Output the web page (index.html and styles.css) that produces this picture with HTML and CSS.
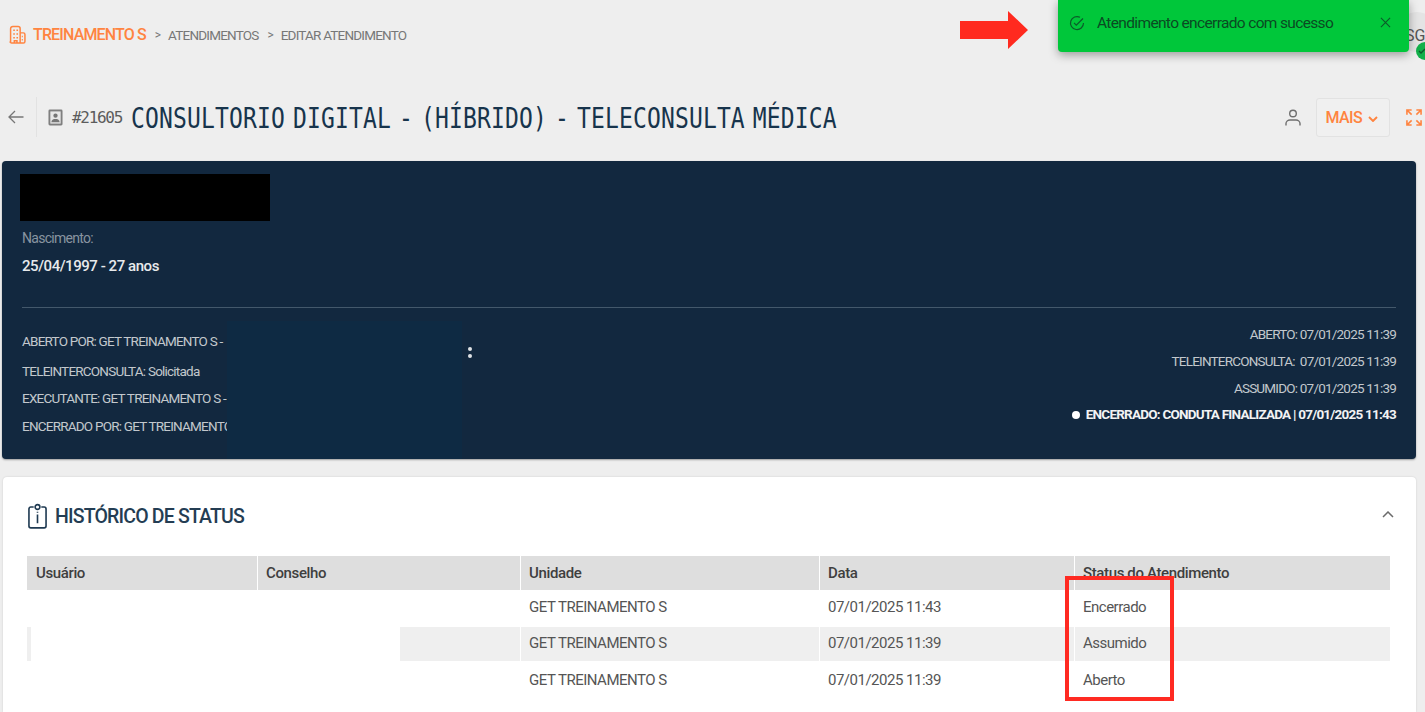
FILE: index.html
```html
<!DOCTYPE html>
<html lang="pt-BR">
<head>
<meta charset="utf-8">
<title>Editar atendimento</title>
<link rel="stylesheet" href="styles.css">
</head>
<body>
<div class="page">
  <header class="topbar">
    <svg class="hospital" viewBox="0 0 16 18" width="17" height="20" fill="none" stroke="#ff8440" stroke-width="1.400"><path d="M1.500 16.500V3a2 2 0 0 1 2-2h5a2 2 0 0 1 2 2v13.500M10.500 7h3a1.500 1.500 0 0 1 1.500 1.500v6.500a1.500 1.500 0 0 1-1.500 1.500h-11A1.500 1.500 0 0 1 1 15"/><path d="M4 4.500h1.500M7 4.500h1.500M4 8h1.500M7 8h1.500M4 11.500h1.500M7 11.500h1.500M12 10.500h1M12 13.500h1M5 16.500v-2h2.500v2"/></svg>
    <span class="crumb-home">TREINAMENTO S</span>
    <span class="crumb-sep">&gt;</span>
    <span class="crumb">ATENDIMENTOS</span>
    <span class="crumb-sep">&gt;</span>
    <span class="crumb">EDITAR ATENDIMENTO</span>
  </header>

  <div class="titlebar">
    <svg class="back" viewBox="0 0 16 14" width="16" height="14" fill="none" stroke="#777" stroke-width="1.300"><path d="M15.500 7H1M7 1 1 7l6 6"/></svg>
    <span class="vsep"></span>
    <svg class="badge" viewBox="0 0 16 18" width="15" height="17"><rect x="0.500" y="0.500" width="15" height="17" rx="1.500" fill="#7f7f7f"/><rect x="2.500" y="2.500" width="11" height="13" fill="#e8e8e8"/><circle cx="8" cy="7" r="2.300" fill="#777"/><path d="M3.500 14c.5-3 2.500-3.500 4.500-3.500s4 .5 4.500 3.500z" fill="#777"/></svg>
    <span class="ticket">#21605</span>
    <h1 class="title">CONSULTORIO DIGITAL - (HÍBRIDO) - TELECONSULTA MÉDICA</h1>
    <svg class="person" viewBox="0 0 16 18" width="16" height="19" fill="none" stroke="#6f6f6f" stroke-width="1.400"><circle cx="8" cy="5" r="3.300"/><path d="M1 17v-2c0-2 2-3.500 4-3.500h6c2 0 4 1.500 4 3.500v2"/></svg>
    <button class="more">MAIS <svg viewBox="0 0 10 6" width="10" height="6" fill="none" stroke="#ff8440" stroke-width="1.900"><path d="M1 1l4 4 4-4"/></svg></button>
    <svg class="expand" viewBox="0 0 17 18" width="16" height="19" fill="none" stroke="#ff8440" stroke-width="1.700"><path d="M1 6V1h5M1 1l5 5M16 6V1h-5M16 1l-5 5M1 12v5h5M1 17l5-5M16 12v5h-5M16 17l-5-5"/></svg>
  </div>

  <section class="patient">
    <div class="patient-name"></div>
    <div class="birth-label">Nascimento:</div>
    <div class="birth-value">25/04/1997 - 27 anos</div>
    <hr class="divider">
    <div class="patient-foot">
      <ul class="people">
        <li class="p1">ABERTO POR: GET TREINAMENTO S -</li>
        <li class="p2">TELEINTERCONSULTA: Solicitada</li>
        <li class="p3">EXECUTANTE: GET TREINAMENTO S -</li>
        <li class="p4">ENCERRADO POR: GET TREINAMENTO S</li>
      </ul>
      <div class="kebab"><i></i><i></i></div>
      <ul class="times">
        <li>ABERTO: 07/01/2025 11:39</li>
        <li>TELEINTERCONSULTA:&nbsp; 07/01/2025 11:39</li>
        <li>ASSUMIDO: 07/01/2025 11:39</li>
        <li class="current"><i></i>ENCERRADO: CONDUTA FINALIZADA | 07/01/2025 11:43</li>
      </ul>
    </div>
    <div class="mask"></div>
  </section>

  <section class="history">
    <div class="history-head">
      <svg class="clip" viewBox="0 0 20 28" width="19" height="27" fill="none" stroke="#1f3a52" stroke-width="1.700"><path d="M6 4H3a2 2 0 0 0-2 2v18a2 2 0 0 0 2 2h14a2 2 0 0 0 2-2V6a2 2 0 0 0-2-2h-3"/><circle cx="10" cy="4" r="2.500"/><path d="M10 12v9M10 9v1"/></svg>
      <h2>HISTÓRICO DE STATUS</h2>
      <svg class="collapse" viewBox="0 0 12 7" width="12" height="7" fill="none" stroke="#6b6b6b" stroke-width="1.500"><path d="M1 6l5-5 5 5"/></svg>
    </div>
    <div class="table">
      <div class="cell th first">Usuário</div><div class="cell th">Conselho</div><div class="cell th">Unidade</div><div class="cell th">Data</div><div class="cell th">Status do Atendimento</div>
      <div class="cell"></div><div class="cell"></div><div class="cell up">GET TREINAMENTO S</div><div class="cell up">07/01/2025 11:43</div><div class="cell up">Encerrado</div>
      <div class="cell alt"></div><div class="cell alt"></div><div class="cell alt up">GET TREINAMENTO S</div><div class="cell alt up">07/01/2025 11:39</div><div class="cell alt up">Assumido</div>
      <div class="cell"></div><div class="cell"></div><div class="cell low">GET TREINAMENTO S</div><div class="cell low">07/01/2025 11:39</div><div class="cell low">Aberto</div>
      <div class="whiteout"></div>
    </div>
  </section>
</div>

<div class="avatar">SG<i><svg viewBox="0 0 10 10" width="10" height="10" fill="none" stroke="#0b5a2a" stroke-width="1.300"><path d="M2 5l2 2 4-4"/></svg></i></div>
<div class="toast">
  <svg viewBox="0 0 16 16" width="16" height="16" fill="none" stroke="#0b5a2a" stroke-width="1.200"><path d="M14.500 8A6.500 6.500 0 1 1 11 2.300"/><path d="M5 7.800l2.300 2.400L14 3.500"/></svg>
  <span>Atendimento encerrado com sucesso</span>
  <svg class="toast-x" viewBox="0 0 12 12" width="11" height="11" fill="none" stroke="#0b5a2a" stroke-width="1.200"><path d="M1 1l10 10M11 1 1 11"/></svg>
</div>
<svg class="arrow" viewBox="0 0 68 38" width="68" height="38"><path d="M0 10h48V0l20 19-20 19V28H0z" fill="#ff2a1f"/></svg>
<div class="highlight"></div>
</body>
</html>
```
FILE: styles.css
```css
* { box-sizing: border-box; }
html, body { margin: 0; height: 100%; overflow: hidden; }
body { background: #eeeeee; font-family: Roboto, "Liberation Sans", sans-serif; color: #555; position: relative; }
ul { list-style: none; margin: 0; padding: 0; }

.topbar { height: 69px; padding: 0 0 0 9px; display: flex; align-items: center; font-size: 14px; }
.hospital { margin-right: 7px; }
.crumb-home { color: #ff8440; font-size: 16px; font-weight: 500; letter-spacing: -0.85px; }
.crumb-sep { color: #777; font-size: 12px; margin: 0 7px 0 9px; }
.crumb { color: #777; font-size: 13.500px; letter-spacing: -0.8px; }

.titlebar { height: 92px; display: flex; align-items: center; padding: 4px 3px 0 8px; }
.back { margin-right: 12px; }
.vsep { width: 1px; height: 40px; background: #e2e2e2; margin-right: 11px; }
.badge { margin-right: 9px; }
.ticket { font-family: "DejaVu Sans Mono", monospace; font-size: 16px; color: #5c5c5c; letter-spacing: -1.300px; margin-right: 9px; }
.title { margin: 3px 0 0; flex: 1; font: 400 23px/1 "DejaVu Sans Mono", monospace; color: #17344c; letter-spacing: 0.150px; word-spacing: -6px; transform: scaleY(1.250); white-space: nowrap; }
.person { margin-right: 15px; }
.more { width: 74px; height: 39px; border: 1px solid #e2e2e2; border-radius: 3px; background: #f0f0f0; color: #ff8440; font: 500 16px Roboto, sans-serif; letter-spacing: -0.6px; padding: 0 2px 0 0; margin-right: 16px; }
.more svg { margin-left: 3px; vertical-align: 1px; }

.patient { position: relative; margin: 0 9px 18px 2px; height: 298px; padding: 13px 20px 0; background: #12283f; border-radius: 4px; box-shadow: 0 1px 2px rgba(0,0,0,.35); color: #d5d8dc; overflow: hidden; }
.patient-name { width: 250px; height: 47px; margin-left: -2px; background: #000; }
.birth-label { margin-top: 9px; font-size: 14px; line-height: 17px; color: #8894a0; letter-spacing: -0.72px; }
.birth-value { margin-top: 10px; font-size: 15px; font-weight: 500; line-height: 18px; color: #e8eaec; letter-spacing: -0.45px; }
.divider { margin: 32px 0 0; border: 0; border-top: 1px solid #43586b; }
.patient-foot { display: flex; align-items: flex-start; position: relative; }
.people { width: 446px; padding-top: 25px; font-size: 13.500px; letter-spacing: -0.78px; white-space: nowrap; color: #c3c8cd; }
.people li { line-height: 17px; }
.p2 { margin-top: 13px; }
.p3 { margin-top: 10px; }
.p4 { margin-top: 11px; }
.kebab { display: flex; flex-direction: column; gap: 3px; margin-top: 39px; }
.kebab i { width: 4px; height: 4px; border-radius: 50%; background: #dfe2e5; }
.times { flex: 1; padding-top: 18px; text-align: right; font-size: 13.500px; letter-spacing: -0.79px; color: #c3c8cd; }
.times li { line-height: 17px; margin-bottom: 10px; }
.times .current { font-weight: 700; color: #f2f3f4; margin-top: -1px; letter-spacing: -0.77px; }
.current i { display: inline-block; width: 8px; height: 8px; border-radius: 50%; background: #fff; margin-right: 6px; }
.mask { position: absolute; left: 225px; top: 160px; width: 235px; height: 138px; background: #0e2a43; }

.history { margin: 0 9px 0 3px; height: 235px; padding: 0 26px 0 24px; background: #fff; border-radius: 4px 4px 0 0; box-shadow: 0 0 2px rgba(0,0,0,.15); }
.history-head { height: 79px; display: flex; align-items: center; }
.clip { margin: 0 8px 0 1px; }
.history-head h2 { margin: 0; flex: 1; font-size: 19.500px; font-weight: 500; color: #243d53; letter-spacing: -0.82px; }
.collapse { margin: 0 -4px 4px 0; }
.table { position: relative; display: grid; grid-template-columns: 230px 262px 298px 254px 315px; grid-template-rows: 34px 36px 35px 36px; column-gap: 1px; font-size: 15px; letter-spacing: -0.5px; color: #555; }
.cell { display: flex; align-items: center; padding-left: 8px; }
.th { background: #dedede; font-weight: 500; color: #3f3f3f; letter-spacing: -0.37px; padding-bottom: 1px; }
.first { padding-left: 9px; }
.up { padding-bottom: 3px; }
.low { padding-top: 1px; }
.alt { background: #efefef; margin-top: 1px; }
.whiteout { position: absolute; left: 4px; top: 71px; width: 369px; height: 34px; background: #fff; }

.avatar { position: absolute; left: 1397px; top: 12px; width: 40px; height: 40px; border-radius: 50%; background: #e4e4e4; padding: 14px 0 0 8px; font-size: 16px; color: #555; }
.avatar i { position: absolute; left: 19px; top: 30px; width: 18px; height: 18px; padding: 4px 0 0 1px; border-radius: 50%; background: #12b04a; }
.avatar svg { display: block; }
.toast { position: absolute; left: 1058px; top: 0; width: 351px; height: 52px; padding: 0 18px 7px 11px; display: flex; align-items: center; background: #00c73a; border-radius: 0 0 4px 4px; box-shadow: 0 3px 10px rgba(0,0,0,.35); color: #0b4a23; font-size: 15.500px; letter-spacing: -0.65px; }
.toast span { flex: 1; margin-left: 12px; }
.arrow { position: absolute; left: 960px; top: 11px; }
.highlight { position: absolute; left: 1065px; top: 576px; width: 109px; height: 125px; border: 4px solid #ff2a22; }
```
